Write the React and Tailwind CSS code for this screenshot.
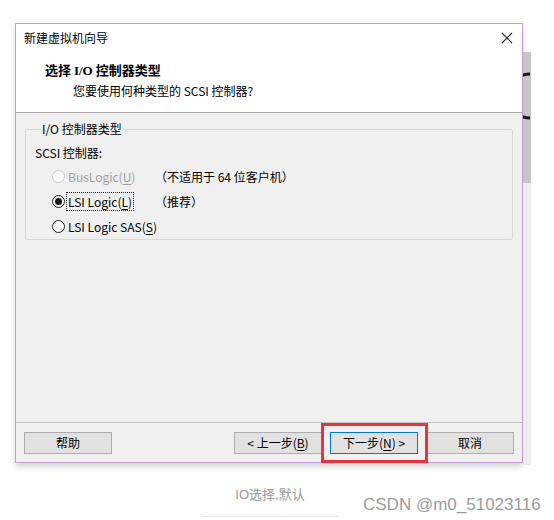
import clsx from 'clsx';

const ui = { fontFamily: '"Noto Sans CJK SC", "Noto Sans", sans-serif' };

function Radio({ checked, disabled }) {
  return (
    <span
      className={clsx(
        'flex h-[13px] w-[13px] shrink-0 items-center justify-center rounded-full border bg-white',
        disabled ? 'border-[#c8c8c8] bg-[#f6f6f6]' : 'border-[#222222]'
      )}
    >
      {checked && <span className="h-[7px] w-[7px] rounded-full bg-[#1a1a1a]" />}
    </span>
  );
}

function Option({ label, mnemonic, rest, note, checked, disabled, focused }) {
  return (
    <div className="flex h-[25px] items-center whitespace-nowrap pl-[17px]">
      <Radio checked={checked} disabled={disabled} />
      <span className="ml-[1px] w-[89px] shrink-0">
        <span
          className={clsx(
            'inline-block border px-[1px] leading-[17px]',
            focused ? 'border-dotted border-[#222222]' : 'border-transparent',
            disabled ? 'text-[#a0a0a0]' : 'text-black'
          )}
        >
          {label}(<span className="underline underline-offset-2">{mnemonic}</span>){rest}
        </span>
      </span>
      {note && <span className="text-black">{note}</span>}
    </div>
  );
}

function Button({ children, primary }) {
  return (
    <button
      type="button"
      className={clsx(
        'flex h-[22px] w-[88px] items-center justify-center whitespace-nowrap border bg-[#e1e1e1] text-[12px] leading-none text-black',
        primary ? 'border-[#0078d7]' : 'border-[#adadad]'
      )}
    >
      {children}
    </button>
  );
}

export default function App() {
  return (
    <div className="h-[520px] w-[554px] overflow-hidden bg-white">
      <div className="flex pl-[15px] pt-[23px]">
        {/* dialog */}
        <div
          className="flex h-[440px] w-[508px] flex-col border border-[#c39bd3] bg-[#f0f0f0] shadow-[0_4px_6px_rgba(0,0,0,0.16)]"
          style={ui}
        >
          <div className="flex h-[27px] items-center justify-between bg-white pl-[8px] pr-[9px] text-[12px] text-black">
            <span>新建虚拟机向导</span>
            <svg width="12" height="12" viewBox="0 0 12 12" className="text-[#222]">
              <path d="M1 1 L11 11 M11 1 L1 11" stroke="currentColor" strokeWidth="1.1" fill="none" />
            </svg>
          </div>

          <div className="h-[62px] border-b border-[#a9a9a9] bg-white pt-[11px]">
            <div className="pl-[29px] text-[13px] font-bold leading-[16px] text-black">
              选择 <span style={{ fontFamily: '"Liberation Serif", serif' }}>I/O</span> 控制器类型
            </div>
            <div className="mt-[4px] pl-[57px] text-[12px] leading-[16px] text-black">
              您要使用何种类型的 SCSI 控制器?
            </div>
          </div>

          <div className="flex-1 px-[9px] pt-[8px]">
            <fieldset className="rounded-[2px] border border-[#d8d8d8] pl-[9px] text-[12px]">
              <legend className="ml-[6px] px-[1px] leading-[16px] text-black">I/O 控制器类型</legend>
              <div className="pt-[8px] leading-[16px] text-black">SCSI 控制器:</div>
              <div className="mt-[3px]">
                <Option label="BusLogic" mnemonic="U" note="（不适用于 64 位客户机）" disabled />
                <Option label="LSI Logic" mnemonic="L" note="（推荐）" checked focused />
                <Option label="LSI Logic SAS" mnemonic="S" />
              </div>
            </fieldset>
          </div>

          <div className="flex h-[40px] items-start justify-between border-t border-[#c4c4c4] pl-[8px] pr-[8px] pt-[9px]">
            <Button>帮助</Button>
            <div className="flex items-start gap-[8px]">
              <Button>
                &lt; 上一步(<span className="underline underline-offset-2">B</span>)
              </Button>
              <div className="relative">
                <Button primary>
                  下一步(<span className="underline underline-offset-2">N</span>) &gt;
                </Button>
                <div className="pointer-events-none absolute -bottom-[9px] -left-[9px] -right-[10px] -top-[9px] border-[3px] border-[#e8323c]" />
              </div>
              <Button>取消</Button>
            </div>
          </div>
        </div>

        {/* window behind, peeking out */}
        <div className="flex w-[8px] flex-col overflow-hidden pt-[29px]">
          <div className="h-[131px] overflow-hidden bg-[#c6c6c6]">
            <svg width="8" height="48" viewBox="0 0 8 48" className="mt-[20px]">
              <path d="M7 2 A22 22 0 0 0 7 46" stroke="#1a1a1a" strokeWidth="3" fill="none" />
            </svg>
          </div>
          <div className="h-[282px] bg-[#ececec]" />
        </div>
      </div>

      <div className="flex items-start">
        <div
          className="ml-[202px] mt-[21px] w-[136px] border-b border-[#ececec] pb-[12px] text-center text-[13px] leading-[18px] text-[#999999]"
          style={{ fontFamily: '"Liberation Sans", "Noto Sans CJK SC", sans-serif' }}
        >
          IO选择,默认
        </div>
        <div
          className="ml-[25px] mt-[30px] whitespace-nowrap text-[17px] leading-[20px] text-[#9c9c9c]"
          style={{ fontFamily: '"Liberation Sans", Arial, sans-serif' }}
        >
          CSDN @m0_51023116
        </div>
      </div>
    </div>
  );
}
